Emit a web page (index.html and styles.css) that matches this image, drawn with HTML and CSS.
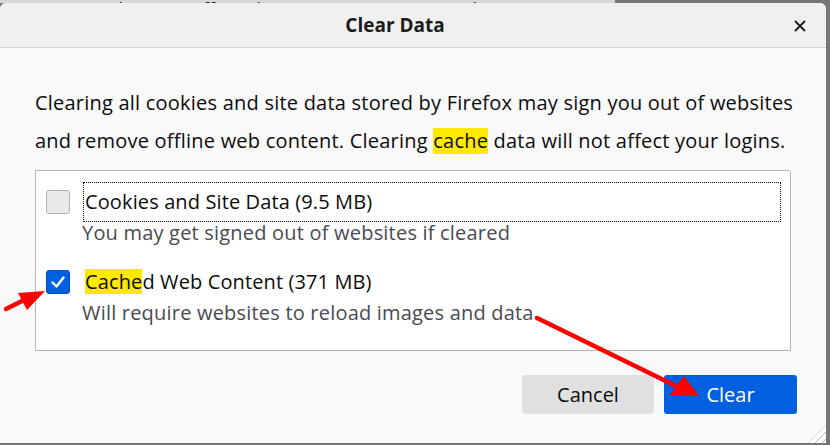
FILE: index.html
```html
<!DOCTYPE html>
<html>
<head>
<meta charset="utf-8">
<link rel="stylesheet" href="styles.css">
</head>
<body>
<div class="under"><span>gure nere, and are not affected</span><span class="u2">Clear D</span></div>
<div class="dialog">
  <div class="titlebar">
    <div class="title">Clear Data</div>
    <svg class="close" width="12" height="12" viewBox="0 0 12 12"><path d="M1 1L11 11M11 1L1 11" stroke="#1a1a1a" stroke-width="1.8" fill="none"/></svg>
  </div>
  <div class="content">
    <p class="intro">Clearing all cookies and site data stored by Firefox may sign you out of websites<br>and remove offline web content. Clearing <mark>cache</mark> data will not affect your logins.</p>
    <div class="box">
      <div class="item">
        <div class="row">
          <span class="check"></span>
          <span class="label focus">Cookies and Site Data (9.5 MB)</span>
        </div>
        <div class="desc">You may get signed out of websites if cleared</div>
      </div>
      <div class="item">
        <div class="row">
          <span class="check on"><svg width="24" height="24" viewBox="0 0 24 24"><path d="M6.5 12.5L10.5 16.5L17.5 7.5" stroke="#fff" stroke-width="2.4" fill="none" stroke-linecap="round" stroke-linejoin="round"/></svg></span>
          <span class="label"><mark>Cache</mark>d Web Content (371 MB)</span>
        </div>
        <div class="desc">Will require websites to reload images and data</div>
      </div>
    </div>
    <div class="buttons">
      <button class="btn cancel">Cancel</button>
      <button class="btn primary">Clear</button>
    </div>
  </div>
  <div class="grip"></div>
</div>
<svg class="arrows" width="830" height="445" viewBox="0 0 830 445">
  <line x1="6" y1="309" x2="28" y2="298" stroke="#ff0000" stroke-width="4.5" stroke-linecap="round"/>
  <polygon points="45,291 18,293 27,310" fill="#ff0000"/>
  <line x1="537" y1="318" x2="680" y2="388" stroke="#ff0000" stroke-width="4.5" stroke-linecap="round"/>
  <polygon points="699,396 670,395 684,376" fill="#ff0000"/>
</svg>
</body>
</html>
```
FILE: styles.css
```css
* { box-sizing: border-box; }
html, body { margin: 0; padding: 0; }
body {
  width: 830px;
  height: 445px;
  background: #767676;
  font-family: "Open Sans", "Noto Sans", sans-serif;
  overflow: hidden;
  position: relative;
}
.under {
  height: 3px;
  overflow: hidden;
  background: #d8d8d8;
  width: 615px;
  font-size: 18px;
  line-height: 18px;
  color: #202020;
  white-space: nowrap;
}
.under span { display: inline-block; margin-top: -15px; }
.under .u2 { margin-left: 200px; }
.dialog {
  width: 826px;
  height: 440px;
  background: #f9f9f9;
  border-radius: 6px 6px 0 0;
  overflow: hidden;
  position: relative;
}
.titlebar {
  height: 45px;
  background: #f0f0f0;
  border-bottom: 1px solid #d6d6d6;
  display: flex;
  align-items: center;
  justify-content: center;
  position: relative;
}
.title {
  font-weight: 700;
  font-size: 19px;
  color: #1c1c1c;
  margin-left: -36px;
}
.close {
  position: absolute;
  right: 20px;
  top: 17px;
}
.content {
  padding: 36px 29px 0 35px;
}
.intro {
  margin: 0;
  font-size: 20px;
  line-height: 38px;
  color: #0c0c0d;
  white-space: nowrap;
  letter-spacing: 0.22px;
}
mark {
  background: #ffe900;
  color: inherit;
}
.intro mark { display: inline-block; line-height: 26px; }
.box {
  margin-top: 10px;
  width: 756px;
  height: 181px;
  background: #fff;
  border: 1px solid #b5b5b5;
  border-radius: 0 3px 0 0;
  padding: 11px 9px 0 10px;
}
.item + .item { margin-top: 18px; }
.row {
  display: flex;
  align-items: center;
  height: 40px;
}
.check {
  width: 24px;
  height: 24px;
  border: 1px solid #b1b1b1;
  background: #e9e9e9;
  border-radius: 3px;
  margin-right: 13px;
  flex: none;
}
.check.on {
  background: #0060df;
  border-color: #0050bf;
}
.check.on svg { display: block; margin: -1px; }
.label {
  flex: 1;
  font-size: 20px;
  color: #0c0c0d;
  height: 40px;
  line-height: 38px;
  padding-left: 1px;
  border: 1px dotted transparent;
  letter-spacing: 0.12px;
}
.label mark { display: inline-block; line-height: 25px; }
.label.focus { border-color: #111; }
.desc {
  padding-left: 36px;
  font-size: 20px;
  line-height: 22px;
  color: #4a4a52;
  letter-spacing: 0.2px;
}
.buttons {
  display: flex;
  justify-content: flex-end;
  gap: 10px;
  margin-top: 24px;
}
.btn {
  border: none;
  height: 39px;
  width: 133px;
  border-radius: 3px;
  font-family: inherit;
  font-size: 20px;
  padding: 0;
}
.cancel { background: #e0e0e0; color: #0c0c0d; width: 132px; }
.primary { background: #0060df; color: #fff; }
.grip {
  position: absolute;
  right: 0;
  bottom: 0;
  width: 18px;
  height: 18px;
  background: repeating-linear-gradient(135deg, #fff 0 2px, #b8b8b8 2px 3px, #fff 3px 5px);
  clip-path: polygon(100% 0, 100% 100%, 0 100%);
}
.arrows {
  position: absolute;
  left: 0;
  top: 0;
  pointer-events: none;
}
```
